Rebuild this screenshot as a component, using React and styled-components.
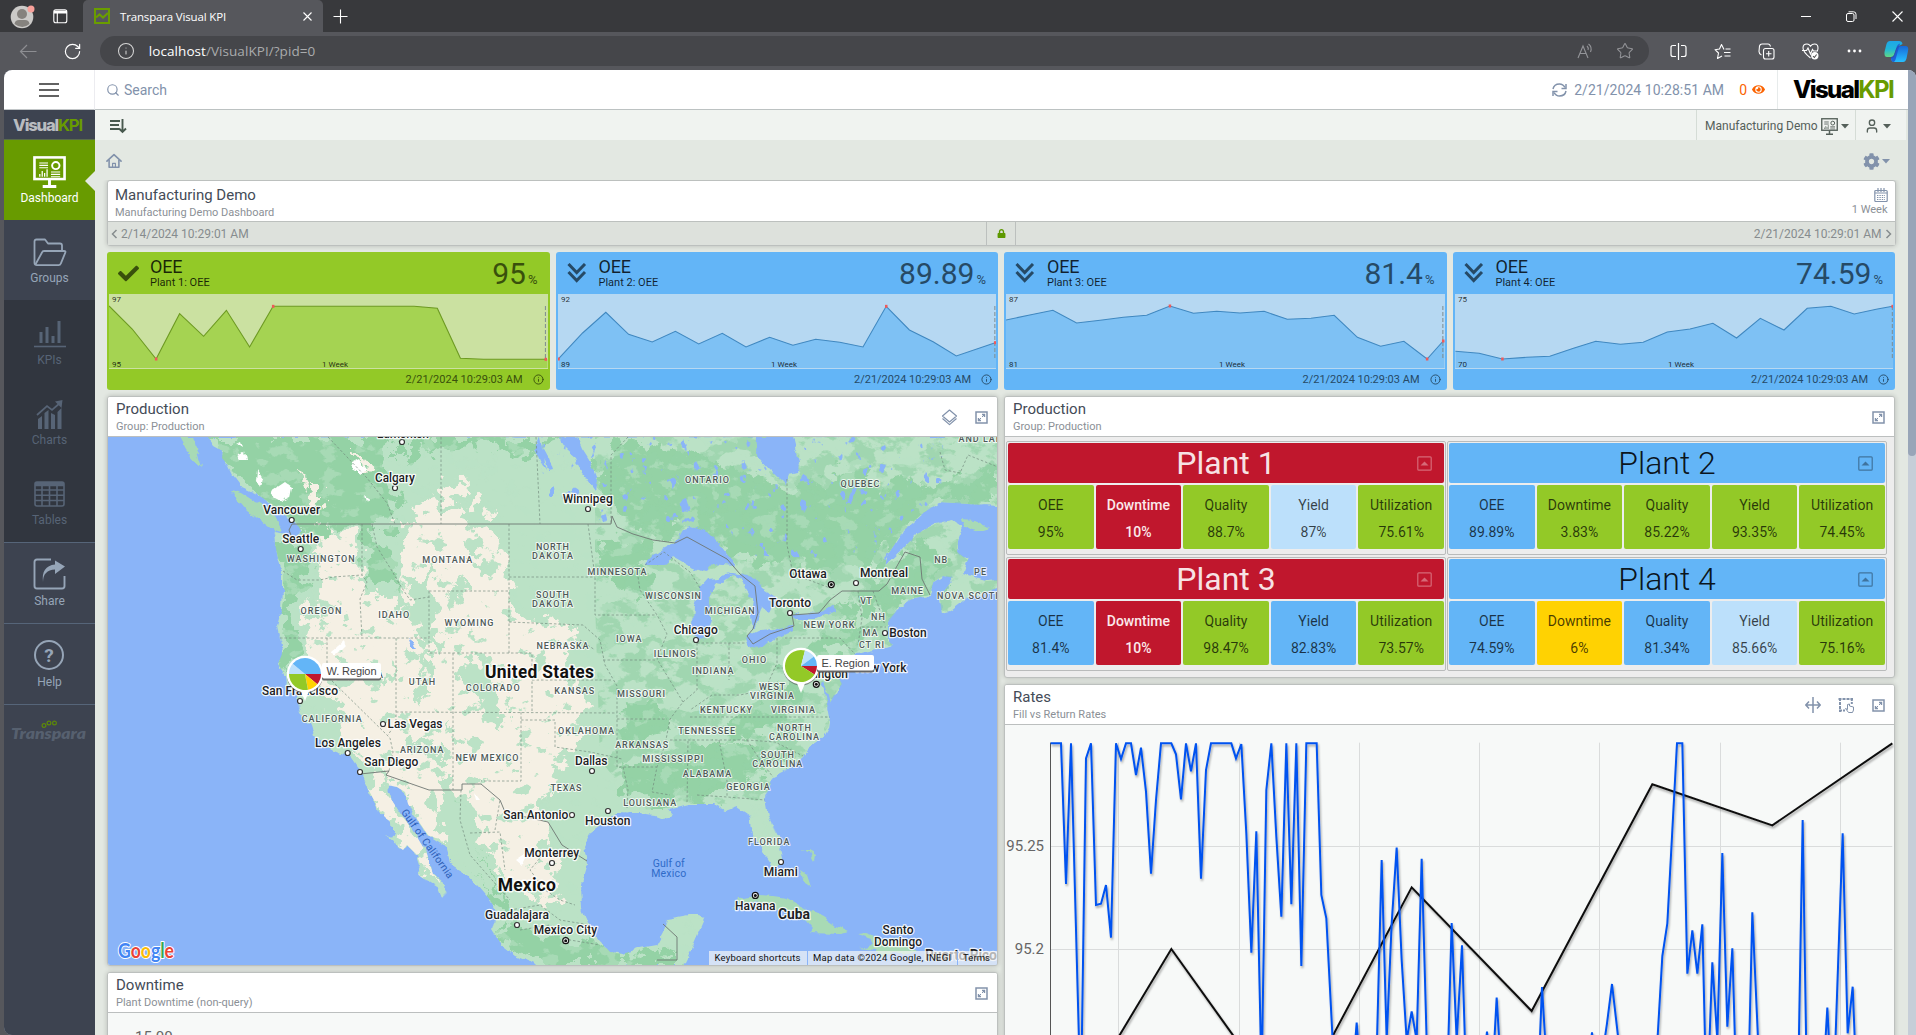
import React from "react";
import styled, { createGlobalStyle } from "styled-components";
import { Search, Star, RotateCw, Info, User } from "lucide-react";
import { FaCheck, FaEye, FaCog, FaLock } from "react-icons/fa";

const SANS = `Roboto, "Liberation Sans", Arial, sans-serif`;
const CHROME = `"Open Sans", "Noto Sans", "Liberation Sans", sans-serif`;

const GlobalStyle = createGlobalStyle`
  * { box-sizing: border-box; }
  body { margin: 0; overflow: hidden; background: #56575c; font-family: ${SANS}; }
  svg { display: block; flex: none; }
`;

/* ---------- palette ---------- */
const GREEN = "#93c927";
const BLUE = "#63b5f7";
const RED = "#c0172d";
const PALE = "#bce0fb";
const YELLOW = "#ffd202";
const SLATE = "#8292ab";

/* ---------- browser window ---------- */
const Window = styled.div`
  width: 1916px;
  height: 1035px;
  display: flex;
  flex-direction: column;
  overflow: hidden;
  background: #56575c;
`;
const TabBar = styled.div`
  height: 32px;
  flex: none;
  display: flex;
  align-items: stretch;
  background: #38393c;
  color: #fff;
`;
const TabTools = styled.div`
  width: 83px;
  display: flex;
  align-items: center;
  padding-left: 10px;
  gap: 18px;
`;
const Tab = styled.div`
  width: 240px;
  display: flex;
  align-items: center;
  padding: 0 11px;
  background: #56575c;
  border-radius: 5px 5px 0 0;
  font: 11.5px ${CHROME};
  letter-spacing: -0.16px;
`;
const TabTitle = styled.span`
  margin-left: 10px;
  flex: 1;
`;
const NewTab = styled.div`
  display: flex;
  align-items: center;
  padding-left: 10px;
  flex: 1;
`;
const WindowButtons = styled.div`
  display: flex;
  align-items: center;
  gap: 35px;
  padding-right: 13px;
`;
const Toolbar = styled.div`
  height: 38px;
  flex: none;
  display: flex;
  align-items: center;
  color: #fff;
`;
const NavButtons = styled.div`
  width: 100px;
  display: flex;
  align-items: center;
  gap: 26px;
  padding-left: 19px;
`;
const AddressBar = styled.div`
  width: 1552px;
  height: 30px;
  border-radius: 15px;
  background: #45464a;
  display: flex;
  align-items: center;
  padding: 0 15px 0 17px;
  font: 13.5px ${CHROME};
  letter-spacing: 0.06px;
  color: #a9abad;
`;
const Host = styled.span`
  color: #fff;
  margin-left: 14px;
`;
const UrlPath = styled.span`
  flex: 1;
`;
const AddressIcons = styled.div`
  display: flex;
  align-items: center;
  gap: 22px;
  color: #939498;
`;
const ToolIcons = styled.div`
  flex: 1;
  display: grid;
  grid-template-columns: repeat(5, 44px) 40px;
  justify-items: center;
  align-items: center;
  padding-left: 7px;
`;
const PageFrame = styled.div`
  flex: 1;
  min-height: 0;
  display: flex;
  margin-left: 4px;
  border-radius: 8px 8px 0 8px;
  overflow: hidden;
  background: #98a5b8;
`;

/* ---------- sidebar ---------- */
const Sidebar = styled.div`
  width: 91px;
  display: flex;
  flex-direction: column;
  background: #3d4350;
`;
const MenuButton = styled.div`
  height: 40px;
  background: #fff;
  border-bottom: 1px solid #c2c6c8;
  border-right: 1px solid #ececf0;
  display: flex;
  align-items: center;
  justify-content: center;
`;
const SideLogo = styled.div`
  height: 30px;
  display: flex;
  align-items: center;
  padding: 4px 0 0 9px;
  border-bottom: 1px solid #596b4a;
`;
const SideItem = styled.div`
  height: ${(p) => p.$h || 80}px;
  flex: none;
  display: flex;
  flex-direction: column;
  align-items: center;
  padding-top: ${(p) => p.$pt || 16}px;
  gap: ${(p) => p.$gap ?? 3}px;
  font-size: 12px;
  line-height: 16px;
  position: relative;
  color: ${(p) => (p.$active ? "#fff" : p.$dim ? "#576476" : "#96a5b7")};
  background: ${(p) => (p.$active ? "#689b00" : p.$dim ? "#31363f" : "#3d4350")};
  ${(p) => p.$line && "border-top: 1px solid #566579;"}
`;
const ActiveArrow = styled.div`
  position: absolute;
  right: 0;
  top: 31px;
  border: 10px solid transparent;
  border-left: 0;
  border-right-color: #e3e8e2;
`;
const SideBrand = styled.div`
  border-top: 1px solid #566579;
  padding: 15px 0 0 7px;
`;

/* ---------- main area ---------- */
const Main = styled.div`
  width: 1813px;
  display: flex;
  flex-direction: column;
  background: #e3e8e2;
`;
const ScrollTrack = styled.div`
  flex: 1;
  background: #c6ced8;
`;
const ScrollThumb = styled.div`
  height: 386px;
  background: #98a5b8;
  border-radius: 0 0 4px 4px;
`;
const Header = styled.div`
  height: 40px;
  flex: none;
  display: flex;
  align-items: center;
  background: #fff;
  border-bottom: 1px solid #bcc2c2;
  color: ${SLATE};
  font-size: 14px;
  padding-left: 11px;
`;
const SearchBox = styled.div`
  flex: 1;
  display: flex;
  align-items: center;
  gap: 4px;
`;
const StatusTime = styled.div`
  display: flex;
  align-items: center;
  gap: 7px;
  margin-right: 15px;
  letter-spacing: 0.05px;
`;
const Watchers = styled.div`
  display: flex;
  align-items: center;
  gap: 5px;
  color: #fb6301;
  margin-right: 12px;
`;
const BrandBox = styled.div`
  width: 131px;
  height: 39px;
  border-left: 1px solid #e7ebeb;
  padding: 8px 0 0 15px;
`;
const SubHeader = styled.div`
  height: 30px;
  flex: none;
  display: flex;
  background: #f0f3f0;
  color: #55605a;
  font-size: 12px;
  margin-right: 2px;
  padding-left: 15px;
`;
const SubLeft = styled.div`
  flex: 1;
  display: flex;
  align-items: center;
  padding-top: 2px;
`;
const SubButton = styled.div`
  width: ${(p) => p.$w}px;
  display: flex;
  align-items: center;
  gap: ${(p) => p.$gap}px;
  padding: 2px 0 0 ${(p) => p.$pl}px;
  border-left: 1px solid #d5dcd6;
`;
const Crumbs = styled.div`
  height: 40px;
  flex: none;
  display: flex;
  align-items: center;
  justify-content: space-between;
  padding: 2px 18px 0 11px;
  color: ${SLATE};
`;
const GearMenu = styled.div`
  display: flex;
  align-items: center;
  gap: 2px;
`;
const Content = styled.div`
  flex: 1;
  min-height: 0;
  overflow: hidden;
  padding-left: 12px;
`;
const TitlePanel = styled.div`
  width: 1788.5px;
  height: 66px;
  background: #fff;
  border: 1px solid #bcc0be;
  border-radius: 3px;
  box-shadow: 0 0 5px rgba(0, 0, 0, 0.2);
`;
const TitleRow = styled.div`
  height: 41px;
  display: flex;
  justify-content: space-between;
  padding: 4px 7px 0 7px;
  border-bottom: 1px solid #bcc0be;
`;
const Heading = styled.div`
  font-size: 15px;
  line-height: 20px;
  color: #444b57;
`;
const SubHeading = styled.div`
  font-size: 11px;
  line-height: 14px;
  padding-top: 1px;
  color: #8b9096;
`;
const RangePick = styled.div`
  display: flex;
  flex-direction: column;
  align-items: flex-end;
  padding-top: 3px;
  color: ${SLATE};
`;
const RangeRow = styled.div`
  height: 23px;
  display: flex;
  align-items: stretch;
  background: #dde1dc;
  color: #868c8e;
  font-size: 12px;
`;
const RangeEnd = styled.div`
  flex: 1;
  display: flex;
  align-items: center;
  justify-content: ${(p) => (p.$right ? "flex-end" : "flex-start")};
  gap: 3px;
  padding: 0 3px;
`;
const LockCell = styled.div`
  width: 30px;
  display: flex;
  align-items: center;
  justify-content: center;
  border: solid #bcc0be;
  border-width: 0 1px;
  color: #5d9800;
`;

/* ---------- KPI cards ---------- */
const KpiRow = styled.div`
  width: 1788px;
  margin-top: 6px;
  display: grid;
  grid-template-columns: repeat(4, 1fr);
  gap: 6px;
`;
const KpiCard = styled.div`
  height: 138px;
  border-radius: 3px;
  background: ${(p) => p.$bg};
  color: ${(p) => p.$ink};
`;
const KpiTop = styled.div`
  height: 42px;
  display: flex;
  padding: 0 12px 0 11px;
`;
const KpiIcon = styled.div`
  width: 32px;
  padding-top: 11px;
`;
const KpiName = styled.div`
  flex: 1;
  padding-top: 5px;
  font-size: 18px;
  line-height: 19px;
  letter-spacing: -0.2px;
  color: rgba(0, 0, 0, 0.82);
`;
const KpiSub = styled.div`
  font-size: 11px;
  line-height: 13px;
  letter-spacing: 0;
`;
const KpiValue = styled.div`
  font-size: 30px;
  line-height: 43px;
  font-weight: 400;
`;
const KpiUnit = styled.span`
  font-size: 13px;
  margin-left: 2px;
`;
const KpiBottom = styled.div`
  display: flex;
  align-items: center;
  justify-content: flex-end;
  gap: 10px;
  height: 21px;
  padding-right: 6px;
  font-size: 11px;
`;
const SparkBox = styled.div`
  height: 75px;
  margin: 0 2px;
  background: ${(p) => p.$bg};
`;

/* ---------- panels ---------- */
const Columns = styled.div`
  margin-top: 6px;
  display: grid;
  grid-template-columns: 891px 891px;
  gap: 6px;
`;
const Column = styled.div`
  display: flex;
  flex-direction: column;
  gap: 6px;
`;
const Panel = styled.div`
  height: ${(p) => p.$h}px;
  border: 1px solid #bcc0be;
  border-radius: 3px;
  background: ${(p) => p.$bg || "#f7f9f8"};
  overflow: hidden;
  box-shadow: 0 0 5px rgba(0, 0, 0, 0.2);
`;
const PanelHead = styled.div`
  height: 40px;
  display: flex;
  justify-content: space-between;
  background: #fff;
  border-bottom: 1px solid #bcbfbf;
  padding: 2px 9px 0 8px;
`;
const PanelIcons = styled.div`
  display: flex;
  align-items: center;
  gap: 17px;
  padding-bottom: 1px;
  color: ${SLATE};
`;
const PlantGrid = styled.div`
  display: grid;
  grid-template-columns: 440px 440px;
  gap: 2px 1px;
  padding: 4px 0 0 1px;
`;
const Plant = styled.div`
  height: 114px;
  border: 1px solid #b9bbbb;
  border-radius: 2px;
  padding: 1px;
`;
const PlantHead = styled.div`
  height: 40px;
  border-radius: 2px;
  background: ${(p) => p.$bg};
  color: ${(p) => (p.$light ? "rgba(255,255,255,.88)" : "rgba(0,0,0,.9)")};
  font-size: 32px;
  line-height: 40px;
  font-weight: ${(p) => (p.$light ? 400 : 300)};
  display: grid;
  grid-template-columns: 1fr auto 1fr;
`;
const PlantToggle = styled.div`
  grid-column: 3;
  display: flex;
  justify-content: flex-end;
  align-items: center;
  padding: 1px 12px 0 0;
  opacity: 0.4;
`;
const PlantName = styled.div`
  grid-column: 2;
`;
const Metrics = styled.div`
  margin-top: 2px;
  display: grid;
  grid-template-columns: repeat(5, 1fr);
  gap: 2px;
`;
const Metric = styled.div`
  height: 64px;
  border-radius: 2px;
  background: ${(p) => p.$bg};
  color: ${(p) => (p.$bg === RED ? "#fbe9eb" : "rgba(0,0,0,.72)")};
  font-weight: ${(p) => (p.$bg === RED ? 500 : 400)};
  font-size: 14px;
  line-height: 27px;
  text-align: center;
  padding-top: 7px;
`;
const AxisPad = styled.div`
  padding: 15px 0 0 27px;
  font-size: 15px;
  color: #666;
`;

/* ---------- icons ---------- */
const LogoSvg = styled.svg`
  overflow: visible;
`;
const Logo = ({ w, h, fs, dark, light }) => (
  <LogoSvg width={w} height={h}>
    <text x="0" y={h * 0.78} fontFamily="Inter, Arial, sans-serif" fontSize={fs} letterSpacing={-fs * 0.07} textLength={w} lengthAdjust="spacingAndGlyphs">
      <tspan fontWeight="800" fill={dark}>Visual</tspan>
      <tspan fontWeight="700" fill={light}>KPI</tspan>
    </text>
  </LogoSvg>
);
const Caret = () => (
  <svg width="8" height="5" fill="currentColor"><path d="M0 0h8L4 4.600z" /></svg>
);
const HomeIcon = () => (
  <svg width="16" height="16" viewBox="0 0 17 16" fill="none" stroke="currentColor" strokeWidth="1.700" strokeLinejoin="round" strokeLinecap="round">
    <path d="M1 8.200 8.500 1.200 16 8.200" />
    <path d="M3.300 7.200V14.600H13.700V7.200" />
    <path d="M7 14.500V10.500h3v4" strokeWidth="1.200" />
  </svg>
);
const Expand = () => (
  <svg width="13" height="13" fill="none" stroke="currentColor">
    <rect x="1" y="1" width="11" height="11" strokeWidth="1.500" />
    <path d="M7 3.500h2.500V6M6 9.500H3.500V7" strokeWidth="1.400" />
    <path d="M9 4 7 6M4 9 6 7" strokeWidth="1" />
  </svg>
);
const Layers = () => (
  <svg width="17" height="17" viewBox="0 0 17 17" fill="none" stroke="currentColor" strokeWidth="1.200" strokeLinejoin="round">
    <path d="M8.500 1 15.500 7 8.500 13 1.500 7Z" />
    <path d="M1.500 9.500 8.500 15.600 15.500 9.500" />
  </svg>
);
const MoveH = () => (
  <svg width="16" height="16" fill="none" stroke="currentColor" strokeWidth="1.500">
    <path d="M8 0v16M1 8h14M4 4.500.8 8 4 11.500M12 4.500 15.200 8 12 11.500" />
  </svg>
);
const SelectArea = () => (
  <svg width="17" height="16" fill="none" stroke="currentColor">
    <path d="M.5 2h14.500" strokeWidth="2.200" strokeDasharray="3 1" />
    <path d="M2 1v14M13.800 1v6M1 13.500h6" strokeWidth="2" strokeDasharray="3 1" />
    <path d="M9.500 7.500v5l-2-1 3 4h4l1-2.500v-3l-4-1v-2z" strokeWidth="1" />
  </svg>
);
const Monitor = ({ w = 33, h = 32 }) => (
  <svg width={w} height={h} viewBox="0 0 34 34" preserveAspectRatio="none" fill="none" stroke="currentColor">
    <rect x="1.500" y="1.500" width="31" height="23" strokeWidth="2.700" />
    <path d="M6.500 7.500h9M6.500 10h9M6.500 12.500h9M18.500 17h9.500M18.500 19.500h9.500M18.500 22h9.500" strokeWidth="1.200" />
    <circle cx="23.500" cy="10.200" r="3.800" strokeWidth="2" />
    <path d="M7 22v-3M9.500 22v-6M12 22v-4M14.500 22v-8" strokeWidth="1.300" />
    <path d="M17 25v6M10 32.400h14" strokeWidth="3" />
  </svg>
);
const FolderIcon = () => (
  <svg width="34" height="29" fill="none" stroke="currentColor" strokeWidth="1.800" strokeLinejoin="round">
    <path d="M1.500 25V3.500Q1.500 1.500 3.500 1.500H12l3 4h12q2 0 2 2V12" />
    <path d="M2 27.200 9 14.500Q9.500 13 11 13H31q2 0 1.300 1.600l-4.500 11Q27.300 27.200 25.500 27.200H4Q1.500 27.200 1.500 25" />
  </svg>
);
const KpiBars = () => (
  <svg width="34" height="28" fill="none" stroke="currentColor" strokeWidth="3">
    <path d="M8 12v11M14 7v16M20 16v7M26 1v22" strokeLinecap="butt" />
    <path d="M1 26.500h32" strokeWidth="1.600" />
  </svg>
);
const ChartsIcon = () => (
  <svg width="28" height="29" viewBox="0 0 28 29" fill="currentColor">
    <path d="M2 19l4-3v13H2zM8.500 13l4-3v19h-4zM15 13l4 2v14h-4zM21.500 12l4-4v21h-4z" />
    <path d="M1 15 11 6l5 4 8-7" fill="none" stroke="currentColor" strokeWidth="1.700" />
    <path d="M19 1.500 26.500 0 25.500 8z" />
  </svg>
);
const TableIcon = () => (
  <svg width="31" height="26" fill="none" stroke="currentColor" strokeWidth="1.600">
    <rect x="1" y="1" width="29" height="24" rx="2" />
    <path d="M1 4.500h29M1 9h29M1 14.300h29M1 19.500h29M8 5v20M15.500 5v20M23 5v20" />
    <path d="M1 3h29" strokeWidth="4" />
  </svg>
);
const ShareIcon = () => (
  <svg width="34" height="32" fill="none" stroke="currentColor" strokeWidth="1.900">
    <path d="M18 1.500H4Q1.500 1.500 1.500 4V28q0 2.500 2.500 2.500H29q2.500 0 2.500-2.500V18" />
    <path d="M10 24Q10 12 22 11.500V16L32 8.500 22 2.500V6.500Q8 8 10 24Z" fill="currentColor" stroke="none" />
  </svg>
);
const HelpIcon = () => (
  <svg width="34" height="32" viewBox="1 0 34 32">
    <circle cx="17" cy="16" r="14" fill="none" stroke="currentColor" strokeWidth="2" />
    <text x="17" y="22.500" textAnchor="middle" fontSize="19" fontWeight="700" fontFamily="Roboto" fill="currentColor">?</text>
  </svg>
);
const TransparaLogo = () => (
  <svg width="78" height="26">
    <text x="0" y="19" fontFamily="Lato, sans-serif" fontWeight="800" fontStyle="italic" fontSize="15" fill="#56606f" textLength="75" lengthAdjust="spacingAndGlyphs">Transpara</text>
    <g fill="none" stroke="#5d8a08" strokeWidth="1.200">
      <circle cx="33" cy="5.500" r="1.900" /><circle cx="38" cy="3" r="1.900" /><circle cx="43.500" cy="3" r="1.900" />
    </g>
  </svg>
);
const Chevrons = () => (
  <svg width="20" height="20" fill="none" stroke="currentColor" strokeWidth="3">
    <path d="M1.500 1 9.700 9.500 18 1M1.500 9 9.700 17.500 18 9" />
  </svg>
);
const SortIcon = () => (
  <svg width="17" height="15" fill="none" stroke="#48594e" strokeWidth="1.900">
    <path d="M0 2h10M0 6h9M0 10h9M12.500 0v13M9 9.500l3.500 3.500L16 9.500" />
  </svg>
);
const SyncIcon = () => (
  <svg width="15" height="14" fill="none" stroke="currentColor" strokeWidth="1.500">
    <path d="M1 6Q2 1 7.500 1 11 1 13 4.500M14 8Q13 13 7.500 13 4 13 2 9.500" />
    <path d="M14 1v4.500H9.500M1 13V8.500h4.500" />
  </svg>
);
const CalendarIcon = () => (
  <svg width="14" height="14" fill="none" stroke="currentColor" strokeWidth="1.200">
    <rect x=".8" y="2.500" width="12.400" height="11" rx="1" />
    <path d="M1 5h12M4 0v4M7 0v4M10 0v4" />
    <path d="M3 7.500h8M3 9.500h8M3 11.500h8" strokeDasharray="1.400 1" />
  </svg>
);
const BoxUp = () => (
  <svg width="15" height="15" fill="none" stroke="currentColor" strokeWidth="1.200">
    <rect x=".8" y=".8" width="13.400" height="13.400" rx="1" />
    <path d="M3.500 9.500 7.500 5.500 11.500 9.500Z" fill="currentColor" stroke="none" />
  </svg>
);
const Avatar = () => (
  <svg width="25" height="25" viewBox="0 0 25 25">
    <circle cx="12" cy="13" r="11.300" fill="#cbcac8" />
    <circle cx="12" cy="10" r="5" fill="#85827e" />
    <path d="M4.500 20Q5 16 9 16h6q4 0 4.500 4-7 6-15 0" fill="#85827e" />
    <circle cx="21" cy="5" r="3.500" fill="#f8a09a" />
  </svg>
);
const TabsIcon = () => (
  <svg width="15" height="15" fill="none" stroke="#fff" strokeWidth="1.100">
    <rect x=".8" y=".8" width="13" height="13" rx="2" />
    <path d="M1 3h13" strokeWidth="3" /><path d="M4.300 4v10" />
  </svg>
);
const Favicon = () => (
  <svg width="16" height="16" fill="none" stroke="#6a9d00" strokeWidth="2">
    <rect x="1" y="1" width="14" height="14" />
    <path d="M2 9.500 5.500 6.500 9 9.500 14 5M2 12" strokeWidth="2.200" />
  </svg>
);
const ReadAloud = () => (
  <svg width="17" height="16" fill="none" stroke="currentColor" strokeWidth="1.100">
    <path d="M1 15 6 3 11 15M3 10.500h6M10 3q2 2 1 4M11.500 1q4 3 2 8" />
  </svg>
);
const FavList = () => (
  <svg width="17" height="17" fill="none" stroke="currentColor" strokeWidth="1.100" strokeLinejoin="round">
    <path d="M10 6.500 7.500 1.500 5.500 6 1 6.700 4.500 10 3.500 15.500 8 13M11.500 6h5M10 9.500h6.500M10.500 13h6" />
  </svg>
);
const Collections = () => (
  <svg width="17" height="17" fill="none" stroke="currentColor" strokeWidth="1.100">
    <rect x="5.500" y="5.500" width="10.500" height="10.500" rx="2" />
    <path d="M3.500 12Q1 11 1 8.500L1.500 3Q2 1 4 1h6q2 0 2.500 2.500M10.700 8v5.500M8 10.700h5.500" />
  </svg>
);
const Health = () => (
  <svg width="17" height="17" fill="none" stroke="currentColor" strokeWidth="1.100">
    <path d="M8.500 15Q1 9 1 5 1 1 5 1q2 0 3.500 2.200Q10 1 12.500 1 16 1 16 5q0 1.500-.7 3M0 7.500h4.500L6 5l2.500 6 2-4.500L11.500 8H16" />
    <circle cx="12.800" cy="12.800" r="3.700" fill="#fff" stroke="none" />
    <path d="M11 13.200 12.400 14.500 14.600 11.500" stroke="#555" />
  </svg>
);
const Copilot = () => (
  <svg width="25" height="23" viewBox="0 0 25 23">
    <defs>
      <linearGradient id="cpA" x1="0" y1="0" x2="0" y2="1"><stop offset="0" stopColor="#1ea6e8" /><stop offset=".5" stopColor="#20b6d9" /><stop offset="1" stopColor="#62d983" /></linearGradient>
      <linearGradient id="cpB" x1="0" y1="1" x2="0" y2="0"><stop offset="0" stopColor="#27c0ff" /><stop offset="1" stopColor="#1768d8" /></linearGradient>
    </defs>
    <path d="M6 1H15Q18 1 18.500 4L15 6Q13 6 12 9L10 15Q9 17.500 6.500 17H3Q0 17 .5 12L2.500 4Q3.500 1 6 1" fill="url(#cpA)" />
    <path d="M19 22H10Q7.500 22 7 18.500L10 17 13.500 8Q14.500 6 17 6H22Q25 6.500 24 11L22.500 18.500Q21.500 22 19 22" fill="url(#cpB)" />
    <path d="M7 17Q9 17 10 15l3-9Q13.700 4 16 3.500L12 18Q11 22 9.500 22 7 22 7 17" fill="#1b4fd0" opacity=".8" />
  </svg>
);

/* ---------- sparkline ---------- */
const Spark = ({ k }) => {
  const W = 438.5;
  const pts = k.pts.map(([x, y]) => [((x - k.x0) / k.w) * W, (y - 162) / 3]);
  const line = pts.map((p) => p.map((n) => n.toFixed(1)).join(",")).join(" ");
  const last = pts[pts.length - 1][0];
  return (
    <svg width="100%" height="75">
      <polygon points={`${pts[0][0]},74 ${line} ${W},${pts[pts.length - 1][1]} ${W},74`} fill={k.area} />
      <polyline points={line} fill="none" stroke={k.stroke} strokeWidth="1.100" />
      <path d={`M${last - 0.3} 12v53`} stroke="#7d8b8f" strokeDasharray="4 2" />
      {k.dots.map((i) => (
        <rect key={i} x={pts[i][0] - 1.2} y={pts[i][1] - 1.5} width="2.500" height="3" fill="#ef5a5a" />
      ))}
      <g fontSize="8" fontFamily="Roboto" fill="rgba(0,0,0,.8)">
        <text x="3" y="8">{k.max}</text>
        <text x="3" y="73">{k.min}</text>
        <text x="226" y="73" textAnchor="middle">1 Week</text>
      </g>
    </svg>
  );
};

const blueKpi = { bg: BLUE, plot: "#b6d8f2", area: "#7ec1f4", stroke: "#4088c0", ink: "#264a66" };
const kpis = [
  {
    bg: GREEN, plot: "#cbe1a1", area: "#a5d352", stroke: "#6d9a22", ink: "#39500c", ok: true,
    name: "Plant 1: OEE", value: "95", max: "97", min: "95", x0: 305, w: 1229, dots: [2, 7, 12],
    pts: [[305, 198], [370, 267], [437, 357], [503, 221], [570, 289], [634, 211], [699, 321], [765, 199], [1160, 199], [1225, 205], [1290, 355], [1355, 358], [1529, 358]],
  },
  {
    ...blueKpi, name: "Plant 2: OEE", value: "89.89", max: "92", min: "89", x0: 40, w: 982, dots: [0, 14, 18],
    pts: [[41, 357], [95, 279], [147, 217], [198, 283], [251, 306], [303, 274], [355, 312], [408, 280], [461, 321], [514, 292], [566, 316], [617, 298], [671, 307], [723, 321], [775, 199], [827, 270], [880, 305], [932, 348], [1019, 308]],
  },
  {
    ...blueKpi, name: "Plant 3: OEE", value: "81.4", max: "87", min: "81", x0: 1044, w: 982, dots: [7, 18, 19],
    pts: [[1044, 240], [1097, 225], [1149, 211], [1202, 249], [1255, 241], [1307, 232], [1359, 226], [1411, 198], [1464, 220], [1516, 214], [1568, 219], [1622, 214], [1674, 238], [1727, 235], [1779, 226], [1831, 292], [1883, 319], [1935, 304], [1987, 357], [2023, 303]],
  },
  {
    ...blueKpi, name: "Plant 4: OEE", value: "74.59", max: "75", min: "70", x0: 535, w: 981, dots: [2, 19],
    pts: [[536, 334], [589, 340], [641, 357], [695, 352], [747, 349], [800, 325], [850, 304], [905, 313], [956, 307], [1010, 276], [1061, 267], [1112, 250], [1165, 294], [1218, 235], [1271, 270], [1323, 205], [1376, 199], [1428, 222], [1480, 207], [1514, 199]],
  },
];

/* ---------- plants ---------- */
const plants = [
  { name: "Plant 1", bg: RED, m: [["95%", GREEN], ["10%", RED], ["88.7%", GREEN], ["87%", PALE], ["75.61%", GREEN]] },
  { name: "Plant 2", bg: BLUE, m: [["89.89%", BLUE], ["3.83%", GREEN], ["85.22%", GREEN], ["93.35%", GREEN], ["74.45%", GREEN]] },
  { name: "Plant 3", bg: RED, m: [["81.4%", BLUE], ["10%", RED], ["98.47%", GREEN], ["82.83%", BLUE], ["73.57%", GREEN]] },
  { name: "Plant 4", bg: BLUE, m: [["74.59%", BLUE], ["6%", YELLOW], ["81.34%", BLUE], ["85.66%", PALE], ["75.16%", GREEN]] },
];
const metricNames = ["OEE", "Downtime", "Quality", "Yield", "Utilization"];

/* ---------- map ---------- */
const LAND =
  "208,437 214,446 223,451 222,458 228,465 233,475 242,487 257,494 267,501 282,513 290,518 296,522 300,532 297,540 293,535 290,539 287,534 274,532 275,544 278,558 283,571 283,589 282,609 277,627 280,640 282,654 278,664 285,675 286,685 292,691 296,688 298,694 297,699 300,713 312,725 315,735 327,747 340,752 350,756 360,771 367,787 375,802 378,812 395,826 395,833 392,839 384,836 392,842 403,850 407,845 417,855 420,864 416,873 425,880 438,888 442,898 447,893 442,881 433,874 427,854 413,830 402,816 393,802 387,785 397,787 405,792 408,804 417,819 428,835 447,847 450,864 467,874 477,885 490,900 497,912 492,930 500,943 515,955 530,961 541,966 683,966 692,948 698,934 705,918 695,915 667,920 663,934 657,945 640,948 623,954 610,952 600,941 590,927 582,909 581,884 587,863 584,845 590,832 607,820 617,813 640,813 655,815 663,818 673,816 667,809 687,804 700,804 713,804 725,811 737,807 750,816 753,834 763,852 773,866 782,866 783,856 778,836 768,816 765,798 773,777 787,770 803,756 812,745 823,738 828,729 830,716 828,706 837,691 842,684 838,677 847,663 855,654 883,648 893,645 888,641 888,622 898,609 913,598 930,595 933,582 943,576 954,578 945,590 940,600 942,613 950,611 967,598 980,593 998,588 998,580 987,581 963,573 968,560 957,552 958,540 963,527 953,520 937,523 917,534 900,552 885,566 887,556 903,531 923,513 940,502 998,506 998,436";
const ISLANDS = [
  "179,437 193,437 196,448 201,463 202,467 196,462 186,450",
  "232,491 243,494 254,501 267,509 278,520 283,532 273,530 257,518 247,511 240,503",
  "732,910 738,899 760,895 773,896 787,898 797,904 807,909 823,917 836,926 849,932 840,934 810,933 814,928 807,920 795,914 780,911 765,904 757,900 745,905",
  "857,934 866,933 880,938 907,941 920,952 905,953 892,953 880,957 876,950 860,948 874,945 872,939",
  "801,870 807,874 811,886 805,882",
  "797,850 804,851 809,850 816,854 815,860 812,854",
  "961,520 975,521 990,528 980,531 965,527",
];
const LAKES = [
  "758,437 757,456 770,470 785,484 789,474 798,472 799,462 793,437",
  "562,437 566,450 575,458 580,470 595,491 597,478 590,460 583,449 578,437",
  "541,437 543,447 549,458 553,470 549,471 544,458 546,470 541,462 536,450",
  "645,565 657,552 675,543 683,529 692,527 708,532 717,541 727,555 735,566 723,565 712,564 705,572 687,565 673,557 664,565",
  "700,588 708,579 718,578 727,573 733,575 722,583 716,582 708,599 712,620 707,638 698,641 693,628 694,606",
  "727,572 740,574 755,578 762,588 773,595 782,605 773,606 770,614 762,607 757,622 753,629 751,615 753,600 745,588 742,579",
  "747,638 752,634 760,630 773,629 784,626 793,625 793,631 772,641 757,648 750,645",
  "790,615 800,612 819,613 835,605 836,611 817,619 797,619",
  "292,519 299,531 297,540 292,533 287,529",
  "407,637 413,641 416,650 411,648",
  "680,499 686,497 690,511 682,510",
  "640,498 645,496 644,500",
  "827,705 825,690 820,682 823,680 829,695 831,706",
  "846,503 854,486 858,488 850,503",
];
const BEIGE = [
  "403,525 460,525 485,530 502,545 512,575 508,600 520,622 545,620 567,632 580,645 566,665 574,690 587,705 584,722 576,745 564,765 554,785 541,800 536,815 549,830 558,850 562,880 570,892 550,910 530,898 515,885 500,872 490,852 482,822 468,800 453,792 440,784 432,800 440,818 448,845 430,838 415,819 406,804 395,787 388,776 373,764 353,752 341,742 342,715 326,700 314,685 306,665 304,640 311,615 309,590 318,575 316,545 326,527 350,535 361,575 369,590 388,602 398,608 406,596 400,580 410,560 402,545",
  "368,776 385,778 388,795 400,815 412,832 424,852 432,874 438,884 425,878 418,868 419,856 408,844 398,845 396,826 380,810 372,792",
  "440,482 450,479 458,485 466,480 472,483 462,490 455,498 445,500 438,492",
  "462,508 478,502 488,504 486,514 470,512",
  "415,506 425,504 440,507 460,512 462,525 415,525 412,515",
  "350,455 360,460 368,470 362,476 352,466",
  "312,492 325,492 326,502 316,508 311,500",
  "298,472 306,478 312,490 305,486",
];
const MID = [
  "423,560 432,580 436,610 430,636 450,642 440,650 424,645 412,625 405,610 415,595",
  "452,600 462,610 458,596 470,592 462,582 448,588",
  "465,660 476,654 485,658 488,675 503,690 508,705 500,730 488,722 480,724 475,700 466,686",
  "422,655 432,650 430,680 424,705 416,700 420,680",
  "409,735 425,738 440,752 450,752 448,764 430,760 415,748",
  "432,785 446,785 452,800 468,815 478,845 494,880 500,900 490,898 470,874 452,860 448,840 436,815",
  "305,700 322,712 336,728 345,745 338,745 322,730 308,716",
  "470,560 490,556 495,562 478,568",
  "460,545 475,540 488,545 470,550",
  "455,730 463,735 465,745 456,742",
  "378,670 381,680 376,692 373,680",
  "390,660 392,680 388,690 386,670",
  "545,850 555,838 566,850 575,860 570,880 576,900 560,905",
];
const DARK = [
  "208,437 395,437 388,460 396,490 400,524 372,524 378,545 396,570 400,590 388,580 372,585 364,575 363,540 350,528 330,526 312,545 310,570 296,590 292,620 300,640 296,665 290,680 280,660 278,628 283,590 280,555 276,540 296,540 300,530 282,512 255,492 235,475",
  "400,437 560,437 540,445 520,455 505,450 470,446 430,452 400,470",
  "597,480 620,440 680,448 740,470 780,490 850,470 900,485 940,480 998,470 998,500 940,500 910,522 885,555 860,570 820,572 790,560 750,565 720,545 690,527 650,535 620,524 612,500",
  "600,540 650,545 670,560 640,570 660,585 640,600 610,585 598,560",
  "855,600 880,570 900,550 930,545 955,560 945,575 925,595 900,600 885,620 870,610",
  "825,640 850,600 862,615 855,640 835,655 812,680 790,710 760,730 735,740 715,745 735,722 765,700 780,680 800,655",
  "625,700 660,700 668,730 640,745 622,740",
  "625,770 690,745 745,745 790,750 768,775 740,790 690,800 650,800 625,790",
  "455,800 468,820 480,850 500,885 512,910 500,925 480,888 465,868 470,850 455,825",
  "500,925 540,935 600,945 640,955 680,950 680,966 540,966 505,940",
];
const SNOW = [
  "238,455 244,452 246,460 240,460", "257,470 262,478 260,488 256,480", "272,490 284,482 292,488 290,498 282,502 275,498",
  "352,462 360,458 367,470 360,474 350,468", "365,495 369,498 367,502", "330,652 344,640 345,645 335,655",
  "474,792 480,800 476,800", "515,860 530,850 522,866", "236,444 240,442 242,448",
];
const SOLID_LINES = [
  "292,524 611,524 612,516 617,527 633,534 653,540 675,543 687,537 727,559 740,574 755,586 758,613 753,629 747,636 753,644 770,634 794,626 792,615 819,613 830,600 842,591 879,591 887,584 897,566 905,552 920,557 922,579 930,595",
  "360,774 389,771 386,775 429,790 462,790 462,784 481,784 500,800 505,812 530,818 548,822 562,845 587,861",
  "292,524 289,530 292,538",
  "663,924 677,937 677,960 657,960",
];
const DASH_LINES = [
  "283,571 297,580 320,580 333,577 362,575", "362,524 362,575 367,582 360,599 362,638", "280,638 429,638",
  "327,638 327,676 390,738 393,752 389,771", "396,638 396,723 388,735", "396,712 617,713", "453,653 453,790",
  "429,591 509,591 509,653", "429,591 429,653 532,653 532,712", "521,712 521,781 481,781", "521,720 555,720 555,747 590,752 622,759",
  "509,524 509,591", "509,577 595,577", "509,622 583,625 600,640 605,665 617,686 617,767 657,767", "532,680 612,680",
  "372,524 377,547 392,571 400,585 410,600 429,597", "441,437 441,524", "328,437 367,478 387,503 395,524", "536,437 540,524",
  "628,437 611,455 611,524", "588,524 595,577 595,615 657,615", "638,577 640,590 657,615 667,634 657,659 683,702 670,719 665,745 657,767 652,792 670,795",
  "603,660 657,660", "617,719 667,719", "623,767 628,790 627,808", "697,643 697,690 683,702", "729,643 729,680", "697,643 745,643",
  "777,638 777,663 765,690 740,695 712,695 690,710", "785,638 840,638 855,654", "690,717 830,717", "670,740 747,740 775,742 803,756",
  "688,741 687,804", "719,740 727,781 727,797", "697,795 727,797 765,800", "747,740 760,760 773,777", "787,479 787,545 793,574 830,588",
  "645,565 664,552 690,572 700,588", "858,591 862,618 858,645", "873,591 885,625", "862,627 886,627", "777,668 830,668 838,677",
  "461,790 460,820 470,855 492,880 510,900", "495,830 500,800", "545,852 530,870 545,890 560,900 575,905", "510,910 540,905 560,920 590,925",
  "940,452 945,470 960,473 968,455 998,467", "520,930 550,925 570,940 600,945", "470,833 500,832 505,870", "580,640 595,650",
];
/* text, centre x, baseline, width */
const STATES = [
  ["WASHINGTON", 320.7, 562, 68], ["MONTANA", 447.3, 563, 50], ["OREGON", 321, 614, 41], ["IDAHO", 393.7, 618, 31],
  ["WYOMING", 469, 626, 49], ["UTAH", 422, 685, 26.5], ["COLORADO", 492.7, 691, 54], ["CALIFORNIA", 331.7, 722, 60],
  ["ARIZONA", 421.7, 753, 43.5], ["NEW MEXICO", 487, 761, 63], ["NEVADA", 360, 678, 46], ["ONTARIO", 707, 483, 44], ["QUEBEC", 860, 487, 39],
  ["AND LAB", 980, 442, 43], ["NORTH", 552.4, 550, 33], ["DAKOTA", 552.4, 559, 41], ["SOUTH", 552.4, 598, 33], ["DAKOTA", 552.4, 607, 41],
  ["MINNESOTA", 617, 575, 59], ["WISCONSIN", 673, 599, 56], ["MICHIGAN", 729.7, 614, 50], ["NB", 940.7, 563, 13],
  ["PE", 980, 575, 12], ["MAINE", 907, 594, 31.5], ["NOVA SCOTIA", 971, 599, 68], ["VT", 866, 604, 11.5], ["NH", 878, 620, 14],
  ["NEW YORK", 829, 628, 51], ["MA", 870, 636, 15], ["CT RI", 871.5, 648, 25], ["IOWA", 628.7, 642, 25.5], ["NEBRASKA", 562.5, 649, 52],
  ["ILLINOIS", 674.7, 657, 42], ["OHIO", 754, 663, 24.5], ["INDIANA", 712.7, 674, 41.5], ["KANSAS", 574.3, 694, 40],
  ["MISSOURI", 641, 697, 48], ["WEST", 772, 690, 26], ["VIRGINIA", 772, 699, 44], ["KENTUCKY", 726, 713, 52], ["VIRGINIA", 793, 713, 44],
  ["OKLAHOMA", 586, 734, 56], ["TENNESSEE", 706.7, 734, 57], ["NORTH", 794, 731, 34], ["CAROLINA", 794, 740, 50],
  ["ARKANSAS", 641.7, 748, 53], ["MISSISSIPPI", 672.7, 762, 61], ["SOUTH", 777.3, 758, 33], ["CAROLINA", 777.3, 767, 50],
  ["ALABAMA", 707, 777, 48.5], ["GEORGIA", 748, 790, 43.5], ["TEXAS", 566, 791, 31], ["LOUISIANA", 649.7, 806, 53], ["FLORIDA", 768.7, 845, 41.5],
];
const CITIES = [
  ["Edmonton", 403, 438, 52], ["Calgary", 395, 482, 40], ["Vancouver", 291.7, 514, 57], ["Seattle", 300.7, 543, 37], ["San Francisco", 300, 695, 76],
  ["Las Vegas", 415, 728, 55], ["Los Angeles", 348, 747, 66], ["San Diego", 391.3, 766, 54], ["Guadalajara", 517, 919, 64],
  ["Mexico City", 565.5, 934, 63.5], ["Monterrey", 551.7, 857, 55], ["San Antonio", 535.8, 819, 65], ["Winnipeg", 587.7, 503, 50],
  ["Ottawa", 808, 578, 37.5], ["Montreal", 884, 577, 48], ["Toronto", 790, 607, 42], ["Boston", 908, 637, 37.5], ["Chicago", 695.7, 634, 44],
  ["Dallas", 591.3, 765, 32.5], ["Houston", 607.7, 825, 45.5], ["Miami", 780.7, 876, 34], ["Havana", 755.3, 910, 40.5],
  ["Santo", 898, 934, 31], ["Domingo", 898, 946, 48], ["Washington", 817, 678, 62], ["New York", 881, 672, 51],
];
const DOTS = [
  [402, 442], [395, 488], [291.7, 520], [300.7, 549], [300, 701], [383, 724], [347.7, 753], [360, 772], [517, 925], [552, 863], [572, 815],
  [588, 509], [856, 583], [790, 613], [885, 633], [696, 640], [592, 771], [608, 811], [781, 862],
];
const CAPITALS = [[565.7, 940.7], [831.3, 584.6], [755.3, 895.4], [816.3, 684.3]];

const MapSvg = styled.svg`
  width: 889px;
  height: 528px;
  font-family: ${SANS};
  text {
    paint-order: stroke;
    stroke-linejoin: round;
  }
`;
const Polys = ({ list, ...rest }) => (
  <g {...rest}>{list.map((p, i) => <polygon key={i} points={p} />)}</g>
);
const Lines = ({ list, ...rest }) => (
  <g fill="none" {...rest}>{list.map((p, i) => <polyline key={i} points={p} />)}</g>
);
const Labels = ({ list, ...rest }) => (
  <g textAnchor="middle" {...rest}>
    {list.map(([t, x, y, w], i) => <text key={i} x={x} y={y} textLength={w}>{t}</text>)}
  </g>
);
/* slices: [start, end, colour] as fractions of a turn, clockwise from the right */
const Pin = ({ x, y, slices, label, lx, lw, tw }) => {
  const at = (f) => `${x + 16 * Math.cos(f * 2 * Math.PI)} ${y + 16 * Math.sin(f * 2 * Math.PI)}`;
  return (
    <g>
      <circle cx={x} cy={y + 1.5} r="18" fill="#555" opacity=".6" />
      <path d={`M${x - 5} ${y + 15}L${x} ${y + 27}L${x + 5} ${y + 15}Z`} fill="#fff" />
      <circle cx={x} cy={y} r="18.300" fill="#fff" />
      {slices.map(([a, b, c]) => (
        <path key={c} d={`M${x} ${y}L${at(a)}A16 16 0 ${b - a > 0.5 ? 1 : 0} 1 ${at(b)}Z`} fill={c} />
      ))}
      <rect x={lx} y={y - 9} width={lw} height="15.500" rx="2" fill="#666" />
      <rect x={lx} y={y - 11} width={lw} height="15.500" rx="2" fill="#fff" />
      <text x={lx + 4.5} y={y + 1} fontSize="11" fill="#444" fontFamily="Liberation Sans, Arial, sans-serif" textLength={tw}>{label}</text>
    </g>
  );
};
const RegionMap = () => (
  <MapSvg viewBox="108 437 889 528">
    <defs>
      <filter id="rough" x="-5%" y="-5%" width="110%" height="110%" colorInterpolationFilters="sRGB">
        <feTurbulence type="fractalNoise" baseFrequency="0.09" numOctaves="3" seed="4" />
        <feDisplacementMap in="SourceGraphic" scale="7" xChannelSelector="R" yChannelSelector="G" />
      </filter>
      <filter id="ragged" x="-5%" y="-5%" width="110%" height="110%" colorInterpolationFilters="sRGB">
        <feTurbulence type="fractalNoise" baseFrequency="0.055" numOctaves="5" seed="9" />
        <feDisplacementMap in="SourceGraphic" scale="42" xChannelSelector="R" yChannelSelector="G" />
      </filter>
      <filter id="speckle" x="0" y="0" width="100%" height="100%" colorInterpolationFilters="sRGB">
        <feTurbulence type="fractalNoise" baseFrequency="0.04 0.055" numOctaves="5" seed="21" />
        <feColorMatrix values="0 0 0 0 0.58  0 0 0 0 0.825  0 0 0 0 0.655  16 0 0 0 -7.8" />
      </filter>
      <filter id="paleSpeckle" x="0" y="0" width="100%" height="100%" colorInterpolationFilters="sRGB">
        <feTurbulence type="fractalNoise" baseFrequency="0.05 0.07" numOctaves="5" seed="33" />
        <feColorMatrix values="0 0 0 0 0.73  0 0 0 0 0.886  0 0 0 0 0.776  14 0 0 0 -8" />
      </filter>
      <filter id="greenSpots" x="0" y="0" width="100%" height="100%" colorInterpolationFilters="sRGB">
        <feTurbulence type="fractalNoise" baseFrequency="0.06 0.08" numOctaves="5" seed="57" />
        <feColorMatrix values="0 0 0 0 0.733  0 0 0 0 0.886  0 0 0 0 0.776  24 0 0 0 -15" />
      </filter>
      <filter id="ponds" x="0" y="0" width="100%" height="100%" colorInterpolationFilters="sRGB">
        <feTurbulence type="fractalNoise" baseFrequency="0.1 0.08" numOctaves="3" seed="12" />
        <feColorMatrix values="0 0 0 0 0.54  0 0 0 0 0.706  0 0 0 0 0.973  18 0 0 0 -12.3" />
      </filter>
      <clipPath id="landClip"><polygon points={LAND} /></clipPath>
      <clipPath id="northClip"><polygon points="540,437 945,437 940,500 885,560 730,555 690,527 611,524 540,505" /></clipPath>
      <clipPath id="eastClip"><polygon points="595,437 998,437 998,600 890,650 770,800 640,810 600,760 595,600" /></clipPath>
      <clipPath id="beigeClip"><polygon points={BEIGE[0]} /></clipPath>
    </defs>
    <rect x="108" y="437" width="889" height="528" fill="#8ab4f8" />
    <polygon points={LAND} fill="#bbe2c6" filter="url(#rough)" />
    <Polys list={ISLANDS} fill="#a8dab5" filter="url(#rough)" />
    <g clipPath="url(#landClip)">
      <Polys list={DARK} fill="#94d2a5" filter="url(#ragged)" />
      <g clipPath="url(#eastClip)"><rect x="590" y="437" width="410" height="400" filter="url(#speckle)" opacity=".7" /></g>
      <rect x="108" y="437" width="889" height="528" filter="url(#paleSpeckle)" opacity=".5" />
      <Polys list={BEIGE} fill="#f5f0e4" filter="url(#ragged)" />
      <g clipPath="url(#beigeClip)"><rect x="300" y="520" width="300" height="400" filter="url(#greenSpots)" /></g>
      <Polys list={MID} fill="#bbe2c6" filter="url(#ragged)" />
      <Polys list={SNOW} fill="#fff" filter="url(#rough)" />
      <g clipPath="url(#northClip)"><rect x="530" y="437" width="470" height="130" filter="url(#ponds)" /></g>
    </g>
    <Polys list={LAKES} fill="#8ab4f8" filter="url(#rough)" />
    <Lines list={DASH_LINES} stroke="#6f8578" strokeWidth=".8" strokeDasharray="2.500 2" opacity=".8" />
    <Lines list={SOLID_LINES} stroke="#6e7673" strokeWidth=".9" />
    <Labels list={STATES} fontSize="9" fontWeight="500" fill="#4f5a58" stroke="#fff" strokeOpacity=".75" strokeWidth="2" />
    <g fill="#fff" stroke="#333" strokeWidth="1.200">
      {DOTS.map(([x, y], i) => <circle key={i} cx={x} cy={y} r="2.500" />)}
    </g>
    {CAPITALS.map(([x, y], i) => (
      <g key={i}>
        <circle cx={x} cy={y} r="3" fill="#fff" stroke="#111" strokeWidth="1.200" />
        <circle cx={x} cy={y} r="1.500" fill="#111" />
      </g>
    ))}
    <Labels list={CITIES} fontSize="12" fontWeight="500" fill="#202124" stroke="#fff" strokeOpacity=".85" strokeWidth="2.500" />
    <Labels list={[["United States", 539.5, 678, 109], ["Mexico", 526.8, 891, 58]]} fontSize="17.500" fontWeight="700" fill="#111" stroke="#fff" strokeOpacity=".85" strokeWidth="3" />
    <Labels list={[["Cuba", 794, 919, 32], ["Puerto Rico", 961, 960, 72]]} fontSize="14" fontWeight="700" fill="#202124" stroke="#fff" strokeOpacity=".85" strokeWidth="2.500" />
    <Labels list={[["Gulf of", 668.7, 867, 32], ["Mexico", 668.7, 877, 35]]} fontSize="10.500" fill="#2f6bc8" />
    <text x="0" y="3" transform="translate(427 844) rotate(54.500)" textAnchor="middle" fontSize="10.500" fill="#2f62b8" textLength="82">Gulf of California</text>
    <Pin x={305} y={674} lx={322} lw={59} tw={50} label="W. Region"
      slices={[[0, 0.11, RED], [0.11, 0.22, YELLOW], [0.22, 0.5, GREEN], [0.5, 0.61, PALE], [0.61, 1, BLUE]]} />
    <Pin x={801} y={666} lx={817} lw={57} tw={48} label="E. Region"
      slices={[[0, 0.09, RED], [0.09, 0.79, GREEN], [0.79, 0.9, PALE], [0.9, 1, BLUE]]} />
    <g fontSize="20" fontFamily="Lato, Roboto, sans-serif" stroke="#fff" strokeWidth="2" fontWeight="700">
      <text x="118" y="958" textLength="56" lengthAdjust="spacingAndGlyphs">
        <tspan fill="#4285f4">G</tspan><tspan fill="#ea4335">o</tspan><tspan fill="#fbbc05">o</tspan><tspan fill="#4285f4">g</tspan><tspan fill="#34a853">l</tspan><tspan fill="#ea4335">e</tspan>
      </text>
    </g>
    <rect x="709" y="951" width="289" height="14" fill="#f5f5f5" opacity=".7" />
    <path d="M807.500 951v14M957.500 951v14" stroke="#8ab4f8" />
    <g fontSize="9.500" fill="#111">
      <text x="714.500" y="961" textLength="86">Keyboard shortcuts</text>
      <text x="813" y="961" textLength="138">Map data ©2024 Google, INEGI</text>
      <text x="963" y="961" textLength="27">Terms</text>
    </g>
  </MapSvg>
);

/* ---------- rates chart ---------- */
const FILL =
  "152,70 183,70 198,492 213,70 238,1000 245,1000 258,115 273,70 288,555 303,551 318,495 333,653 348,70 363,117 378,70 393,70 408,165 423,83 438,215 453,461 468,240 483,70 514,70 528,103 543,238 558,70 573,154 588,70 603,476 618,150 633,70 694,70 708,115 724,72 739,340 754,698 769,334 783,1000 786,1000 799,210 814,70 829,350 844,590 859,70 874,553 889,70 904,738 919,70 950,70 964,525 979,595 1000,1000 1063,1000 1070,908 1077,1000 1130,1000 1145,420 1160,960 1175,610 1190,383 1205,720 1220,960 1235,874 1250,960 1265,416 1281,1000 1344,1000 1355,609 1370,960 1386,676 1396,1000 1454,1000 1461,935 1468,1000 1481,1000 1490,833 1500,1000 1618,1000 1626,801 1638,1000 1768,1000 1776,937 1784,1000 1808,1000 1821,910 1836,792 1860,1000 1970,1000 1987,708 2002,610 2031,70 2047,70 2062,761 2077,631 2092,761 2107,613 2116,1000 2127,1000 2137,727 2152,960 2167,399 2182,920 2197,685 2206,1000 2247,1000 2257,577 2276,1000 2396,1000 2408,300 2419,1000 2474,1000 2482,863 2489,1000 2505,1000 2528,340 2543,940 2558,800 2566,1000";
const RETURN = "320,1010 514,687 745,1010 965,1010 1235,502 1595,873 1957,193 2317,316 2677,70";
const RatesChart = () => (
  <svg width="889" height="310" viewBox="15 15 2667 930">
    <defs>
      <filter id="soft"><feDropShadow dx="3" dy="6" stdDeviation="3" floodOpacity=".35" /></filter>
    </defs>
    <g stroke="#dadcdc" strokeWidth="3">
      {[355, 718, 1078, 1438, 1798, 2161, 2521].map((x) => <path key={x} d={`M${x + 0.5} 68V950`} />)}
      <path d="M152 379.500H2677M152 688.500H2677" />
    </g>
    <path d="M151.500 68V950" stroke="#555" strokeWidth="3" />
    <polyline points={RETURN} fill="none" stroke="#111" strokeWidth="6" filter="url(#soft)" />
    <polyline points={FILL} fill="none" stroke="#0552f0" strokeWidth="6" filter="url(#soft)" />
    <g fontSize="45" fontFamily="Roboto" fill="#666" textAnchor="end">
      <text x="132" y="393">95.25</text>
      <text x="132" y="702">95.2</text>
    </g>
  </svg>
);

const PanelTitle = ({ title, sub }) => (
  <div>
    <Heading>{title}</Heading>
    <SubHeading>{sub}</SubHeading>
  </div>
);

export default function App() {
  return (
    <Window>
      <GlobalStyle />
      <TabBar>
        <TabTools><Avatar /><TabsIcon /></TabTools>
        <Tab>
          <Favicon />
          <TabTitle>Transpara Visual KPI</TabTitle>
          <svg width="9" height="9" stroke="#fff" strokeWidth="1.100"><path d="M.5.5l8 8M8.500.5l-8 8" /></svg>
        </Tab>
        <NewTab><svg width="15" height="15" stroke="#fff" strokeWidth="1.100"><path d="M7.500.5v14M.5 7.500h14" /></svg></NewTab>
        <WindowButtons>
          <svg width="10" height="10" stroke="#fff"><path d="M0 5.500h10" /></svg>
          <svg width="11" height="11" fill="none" stroke="#fff"><rect x=".5" y="2.500" width="7.500" height="8" rx="1.500" /><path d="M2.500.8h5Q10 .8 10 3.300V8" /></svg>
          <svg width="11" height="11" stroke="#fff" strokeWidth="1.100"><path d="M.5.5l10 10M10.500.5l-10 10" /></svg>
        </WindowButtons>
      </TabBar>
      <Toolbar>
        <NavButtons>
          <svg width="18" height="15" fill="none" stroke="#8d8e92" strokeWidth="1.200"><path d="M17.500 7.500H1.500M8 1 1.500 7.500 8 14" /></svg>
          <RotateCw size={19} strokeWidth={1.5} />
        </NavButtons>
        <AddressBar>
          <Info size={18} strokeWidth={1.4} color="#d5d5d5" />
          <Host>localhost</Host>
          <UrlPath>/VisualKPI/?pid=0</UrlPath>
          <AddressIcons><ReadAloud /><Star size={18} strokeWidth={1.4} /></AddressIcons>
        </AddressBar>
        <ToolIcons>
          <svg width="17" height="17" fill="none" stroke="#fff" strokeWidth="1.200"><path d="M6 2.500H3Q1 2.500 1 4.500v7q0 2 2 2h3M11 2.500h3q2 0 2 2v7q0 2-2 2h-3M8.500 0v17" /></svg>
          <FavList />
          <Collections />
          <Health />
          <svg width="15" height="4" fill="#fff"><circle cx="2" cy="2" r="1.400" /><circle cx="7.500" cy="2" r="1.400" /><circle cx="13" cy="2" r="1.400" /></svg>
          <Copilot />
        </ToolIcons>
      </Toolbar>
      <PageFrame>
        <Sidebar>
          <MenuButton>
            <svg width="20" height="14" stroke="#2f2f2f" strokeWidth="1.700"><path d="M0 1h20M0 7h20M0 13h20" /></svg>
          </MenuButton>
          <SideLogo><Logo w={69} h={16} fs={16.5} dark="#b9bcc0" light="#689b00" /></SideLogo>
          <SideItem $active $pt={16} $gap={2}><Monitor /><span>Dashboard</span><ActiveArrow /></SideItem>
          <SideItem $pt={18} $gap={3}><FolderIcon /><span>Groups</span></SideItem>
          <SideItem $dim $h={81} $pt={20} $gap={4}><KpiBars /><span>KPIs</span></SideItem>
          <SideItem $dim $h={80} $pt={19} $gap={3}><ChartsIcon /><span>Charts</span></SideItem>
          <SideItem $dim $h={81} $pt={20} $gap={5}><TableIcon /><span>Tables</span></SideItem>
          <SideItem $line $h={81} $pt={15} $gap={3}><ShareIcon /><span>Share</span></SideItem>
          <SideItem $line $h={81} $pt={15} $gap={3}><HelpIcon /><span>Help</span></SideItem>
          <SideBrand><TransparaLogo /></SideBrand>
        </Sidebar>
        <Main>
          <Header>
            <SearchBox><Search size={14} strokeWidth={2} /><span>Search</span></SearchBox>
            <StatusTime><SyncIcon /><span>2/21/2024 10:28:51 AM</span></StatusTime>
            <Watchers><span>0</span><FaEye size={13} /></Watchers>
            <BrandBox><Logo w={100} h={25} fs={24} dark="#000" light="#689b00" /></BrandBox>
          </Header>
          <SubHeader>
            <SubLeft><SortIcon /></SubLeft>
            <SubButton $w={159} $pl={8} $gap={3}><span>Manufacturing Demo</span><Monitor w={17} h={17} /><Caret /></SubButton>
            <SubButton $w={51} $pl={8} $gap={3}><User size={16} strokeWidth={2} /><Caret /></SubButton>
          </SubHeader>
          <Crumbs>
            <HomeIcon />
            <GearMenu><FaCog size={17} /><Caret /></GearMenu>
          </Crumbs>
          <Content>
            <TitlePanel>
              <TitleRow>
                <PanelTitle title="Manufacturing Demo" sub="Manufacturing Demo Dashboard" />
                <RangePick><CalendarIcon /><SubHeading>1 Week</SubHeading></RangePick>
              </TitleRow>
              <RangeRow>
                <RangeEnd>
                  <svg width="7" height="10" fill="none" stroke="currentColor" strokeWidth="1.500"><path d="M5.500 1 1.500 5l4 4" /></svg>
                  <span>2/14/2024 10:29:01 AM</span>
                </RangeEnd>
                <LockCell><FaLock size={9} /></LockCell>
                <RangeEnd $right>
                  <span>2/21/2024 10:29:01 AM</span>
                  <svg width="7" height="10" fill="none" stroke="currentColor" strokeWidth="1.500"><path d="M1.500 1l4 4-4 4" /></svg>
                </RangeEnd>
              </RangeRow>
            </TitlePanel>
            <KpiRow>
              {kpis.map((k) => (
                <KpiCard key={k.name} $bg={k.bg} $ink={k.ink}>
                  <KpiTop>
                    <KpiIcon>{k.ok ? <FaCheck size={21} /> : <Chevrons />}</KpiIcon>
                    <KpiName>OEE<KpiSub>{k.name}</KpiSub></KpiName>
                    <KpiValue>{k.value}<KpiUnit>%</KpiUnit></KpiValue>
                  </KpiTop>
                  <SparkBox $bg={k.plot}><Spark k={k} /></SparkBox>
                  <KpiBottom><span>2/21/2024 10:29:03 AM</span><Info size={11} strokeWidth={2} /></KpiBottom>
                </KpiCard>
              ))}
            </KpiRow>
            <Columns>
              <Column>
                <Panel $h={570}>
                  <PanelHead>
                    <PanelTitle title="Production" sub="Group: Production" />
                    <PanelIcons><Layers /><Expand /></PanelIcons>
                  </PanelHead>
                  <RegionMap />
                </Panel>
                <Panel $h={120}>
                  <PanelHead>
                    <PanelTitle title="Downtime" sub="Plant Downtime (non-query)" />
                    <PanelIcons><Expand /></PanelIcons>
                  </PanelHead>
                  <AxisPad>15.00</AxisPad>
                </Panel>
              </Column>
              <Column>
                <Panel $h={282} $bg="#ededed">
                  <PanelHead>
                    <PanelTitle title="Production" sub="Group: Production" />
                    <PanelIcons><Expand /></PanelIcons>
                  </PanelHead>
                  <PlantGrid>
                    {plants.map((p) => (
                      <Plant key={p.name}>
                        <PlantHead $bg={p.bg} $light={p.bg === RED}>
                          <PlantName>{p.name}</PlantName>
                          <PlantToggle><BoxUp /></PlantToggle>
                        </PlantHead>
                        <Metrics>
                          {p.m.map(([v, c], i) => (
                            <Metric key={i} $bg={c}>{metricNames[i]}<br />{v}</Metric>
                          ))}
                        </Metrics>
                      </Plant>
                    ))}
                  </PlantGrid>
                </Panel>
                <Panel $h={400}>
                  <PanelHead>
                    <PanelTitle title="Rates" sub="Fill vs Return Rates" />
                    <PanelIcons><MoveH /><SelectArea /><Expand /></PanelIcons>
                  </PanelHead>
                  <RatesChart />
                </Panel>
              </Column>
            </Columns>
          </Content>
        </Main>
        <ScrollTrack><ScrollThumb /></ScrollTrack>
      </PageFrame>
    </Window>
  );
}
